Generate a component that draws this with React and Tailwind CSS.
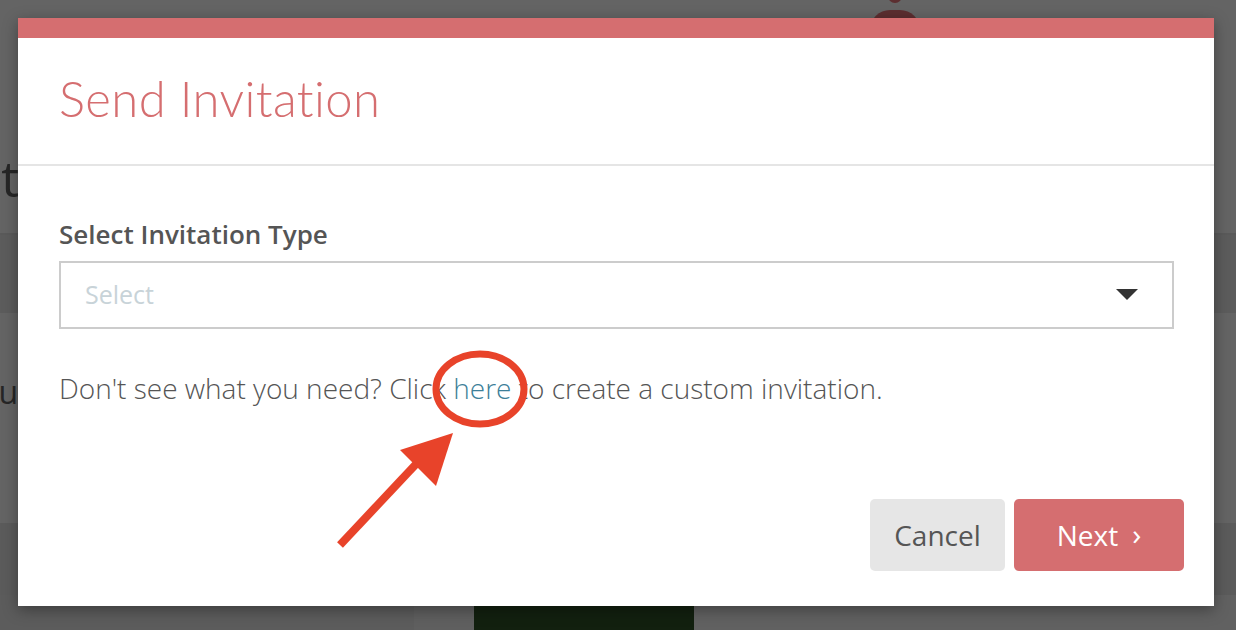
import React from 'react';

function Annotation() {
  return (
    <svg className="absolute left-0 top-0 pointer-events-none" width="1236" height="630" viewBox="0 0 1236 630">
      <ellipse cx="480" cy="389" rx="44" ry="35" fill="none" stroke="#e8432a" strokeWidth="7" />
      <line x1="340" y1="545" x2="418" y2="462" stroke="#e8432a" strokeWidth="8" />
      <polygon points="453,433 400,450 436,486" fill="#e8432a" />
    </svg>
  );
}

export default function App() {
  return (
    <div
      className="relative w-[1236px] h-[630px] overflow-hidden bg-[#646464]"
      style={{ fontFamily: '"Open Sans", "Liberation Sans", sans-serif' }}
    >
      {/* page behind the overlay */}
      <div className="flex flex-col h-full">
        <div className="h-[233px] flex flex-col">
          <div className="h-[18px] flex">
            <div className="w-[866px]" />
            <div className="relative w-[60px] h-[18px]">
              <div className="absolute left-[22px] top-[-11px] w-[14px] h-[14px] rounded-full bg-[#5c2e30]" />
              <div className="absolute left-[4px] top-[10px] w-[50px] h-[40px] rounded-full bg-[#5c2e30]" />
            </div>
          </div>
          <div className="mt-[130px] w-[18px] overflow-hidden flex justify-end">
            <span className="whitespace-nowrap text-[50px] leading-[60px] tracking-[-1px] text-[#262626]">Submit</span>
          </div>
        </div>
        <div className="h-[2px] bg-[#5a5a5a]" />
        <div className="h-[78px] bg-[#5c5c5c]" />
        <div className="h-[210px] bg-[#646464] flex items-center">
          <div className="w-[18px] overflow-hidden flex justify-end -mt-[52px]">
            <span className="whitespace-nowrap text-[32px] text-[#262626]">Resu</span>
          </div>
        </div>
        <div className="h-[72px] bg-[#5b5b5b]" />
        <div className="flex-1 flex">
          <div className="w-[414px] bg-[#5c5c5c]" />
          <div className="w-[60px] bg-[#5f5f5f]" />
          <div className="w-[220px] bg-[#12200f]" />
          <div className="flex-1 bg-[#616161]" />
        </div>
      </div>

      {/* modal */}
      <div className="absolute left-[18px] top-[18px] w-[1196px] h-[588px] bg-white flex flex-col shadow-[0_4px_14px_rgba(0,0,0,0.35)]">
        <div className="h-[20px] bg-[#d56e70]" />
        <div className="h-[128px] flex items-center px-[41px] border-b-2 border-[#e5e5e5]">
          <h1
            className="text-[49px] font-light text-[#d56e70] -mt-[4px] tracking-[0.4px]"
            style={{ fontFamily: 'Lato, "Open Sans", sans-serif' }}
          >
            Send Invitation
          </h1>
        </div>
        <div className="flex-1 flex flex-col px-[41px] pt-[52px]">
          <label className="text-[26px] leading-[32px] font-semibold text-[#555555]">Select Invitation Type</label>
          <div className="mt-[11px] w-[1115px] h-[68px] border-2 border-[#cccccc] flex items-center justify-between pl-[24px] pr-[34px]">
            <span className="text-[25px] text-[#c8d3d8]">Select</span>
            <svg width="22" height="12" viewBox="0 0 22 12">
              <polygon points="0,0 22,0 11,11" fill="#333333" />
            </svg>
          </div>
          <p className="mt-[41px] text-[28px] leading-[36px] font-light text-[#555555]">
            Don't see what you need? Click <span className="text-[#3d7f99]">here</span> to create a custom invitation.
          </p>
          <div className="mt-auto mb-[35px] -mr-[11px] flex justify-end gap-[9px]">
            <button className="w-[135px] h-[72px] rounded-[5px] bg-[#e6e6e6] text-[28px] text-[#555555]">Cancel</button>
            <button className="w-[170px] h-[72px] rounded-[5px] bg-[#d56e70] text-[28px] text-white flex items-center justify-center gap-[14px]">
              Next
              <span className="text-[30px] -mt-[3px]">›</span>
            </button>
          </div>
        </div>
      </div>

      <Annotation />
    </div>
  );
}
